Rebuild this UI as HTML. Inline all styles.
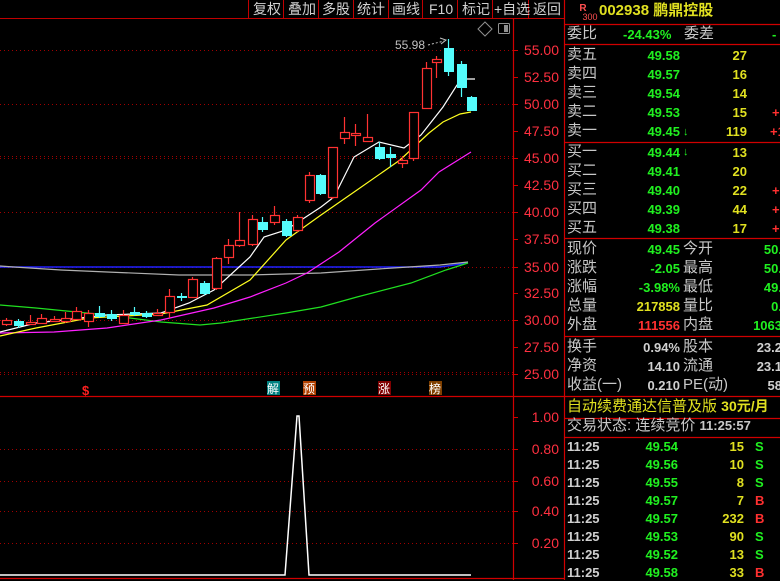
<!DOCTYPE html>
<html><head><meta charset="utf-8"><style>
*{margin:0;padding:0;box-sizing:border-box}
body{width:780px;height:580px;background:#000;overflow:hidden;position:relative;font-family:"Liberation Sans","Noto Sans CJK SC",sans-serif}
.t{position:absolute;white-space:nowrap;font-size:14px;line-height:16px}
.n{font-weight:bold;font-size:13px}
.l{color:#c8c8c8}.g{color:#20f020}.y{color:#e0e020}.r{color:#ff3030}.w{color:#d0d0d0}
.rt{text-align:right}
</style></head><body>
<svg width="780" height="580" style="position:absolute;left:0;top:0">
<!-- top bar -->
<g stroke="#c00000" stroke-width="1">
<line x1="0" y1="18.5" x2="564" y2="18.5"/>
<line x1="248.5" y1="0" x2="248.5" y2="18"/><line x1="283.5" y1="0" x2="283.5" y2="18"/><line x1="318.5" y1="0" x2="318.5" y2="18"/><line x1="353.5" y1="0" x2="353.5" y2="18"/><line x1="388.5" y1="0" x2="388.5" y2="18"/><line x1="422.5" y1="0" x2="422.5" y2="18"/><line x1="457.5" y1="0" x2="457.5" y2="18"/><line x1="492.5" y1="0" x2="492.5" y2="18"/><line x1="528.5" y1="0" x2="528.5" y2="18"/>
</g>
<g stroke="#d00000" stroke-width="1.2">
<line x1="513.5" y1="18" x2="513.5" y2="580"/>
<line x1="564.5" y1="0" x2="564.5" y2="580"/>
<line x1="0" y1="396.5" x2="564" y2="396.5"/>
<line x1="0" y1="578.5" x2="564" y2="578.5"/>
<line x1="565" y1="24.5" x2="780" y2="24.5"/>
<line x1="565" y1="44.5" x2="780" y2="44.5"/>
<line x1="565" y1="142.5" x2="780" y2="142.5"/>
<line x1="565" y1="238.5" x2="780" y2="238.5"/>
<line x1="565" y1="336.5" x2="780" y2="336.5"/>
<line x1="565" y1="396.5" x2="780" y2="396.5"/>
<line x1="565" y1="418.5" x2="780" y2="418.5"/>
<line x1="565" y1="437.5" x2="780" y2="437.5"/>
</g>
<!-- grid -->
<g stroke="#a00000" stroke-width="1" stroke-dasharray="1,3">
<line x1="0" y1="50.5" x2="513" y2="50.5"/><line x1="0" y1="104.5" x2="513" y2="104.5"/>
<line x1="0" y1="156.5" x2="513" y2="156.5"/><line x1="0" y1="158.5" x2="513" y2="158.5"/>
<line x1="0" y1="212.5" x2="513" y2="212.5"/><line x1="0" y1="267.5" x2="513" y2="267.5"/>
<line x1="0" y1="320.5" x2="513" y2="320.5"/><line x1="0" y1="372.5" x2="513" y2="372.5"/><line x1="0" y1="374.5" x2="513" y2="374.5"/>
<line x1="0" y1="449.5" x2="513" y2="449.5"/><line x1="0" y1="481.5" x2="513" y2="481.5"/><line x1="0" y1="511.5" x2="513" y2="511.5"/><line x1="0" y1="543.5" x2="513" y2="543.5"/>
</g>
<g stroke="#d00000"><line x1="513" y1="50.5" x2="518" y2="50.5"/><line x1="513" y1="77.5" x2="518" y2="77.5"/><line x1="513" y1="104.5" x2="518" y2="104.5"/><line x1="513" y1="131.5" x2="518" y2="131.5"/><line x1="513" y1="158.5" x2="518" y2="158.5"/><line x1="513" y1="185.5" x2="518" y2="185.5"/><line x1="513" y1="212.5" x2="518" y2="212.5"/><line x1="513" y1="239.5" x2="518" y2="239.5"/><line x1="513" y1="267.5" x2="518" y2="267.5"/><line x1="513" y1="293.5" x2="518" y2="293.5"/><line x1="513" y1="320.5" x2="518" y2="320.5"/><line x1="513" y1="347.5" x2="518" y2="347.5"/><line x1="513" y1="374.5" x2="518" y2="374.5"/>
<line x1="513" y1="417.5" x2="518" y2="417.5"/><line x1="513" y1="449.5" x2="518" y2="449.5"/><line x1="513" y1="481.5" x2="518" y2="481.5"/><line x1="513" y1="511.5" x2="518" y2="511.5"/><line x1="513" y1="543.5" x2="518" y2="543.5"/></g>
<g fill="#ff3040" font-family="Liberation Sans" font-size="14" text-anchor="end">
<text x="559" y="55">55.00</text><text x="559" y="82">52.50</text><text x="559" y="109">50.00</text><text x="559" y="136">47.50</text><text x="559" y="163">45.00</text><text x="559" y="190">42.50</text><text x="559" y="217">40.00</text><text x="559" y="244">37.50</text><text x="559" y="272">35.00</text><text x="559" y="298">32.50</text><text x="559" y="325">30.00</text><text x="559" y="352">27.50</text><text x="559" y="379">25.00</text>
<text x="559" y="422">1.00</text><text x="559" y="454">0.80</text><text x="559" y="486">0.60</text><text x="559" y="516">0.40</text><text x="559" y="548">0.20</text>
</g>
<!-- icons -->
<path d="M485 22 L492 29 L485 36 L478 29 Z" fill="none" stroke="#909090"/>
<rect x="498.5" y="23.5" width="11" height="10" rx="1" fill="none" stroke="#909090"/><rect x="504" y="25" width="4" height="7" fill="#909090"/>
<!-- MA lines -->
<polyline fill="none" stroke="#2020ff" stroke-width="1.5" points="0,267 440,267 468,263"/>
<polyline fill="none" stroke="#b0b0b0" stroke-width="1.2" points="0,266 14,267 61,270 107,272 179,275 250,275 321,273 393,268 440,265 468,262"/>
<polyline fill="none" stroke="#20e020" stroke-width="1.2" points="0,305 36,308 107,315 161,322 200,325 221,323 286,313 321,307 357,297 411,283 446,270 468,263"/>
<polyline fill="none" stroke="#ff20ff" stroke-width="1.2" points="0,333 54,332 107,328 161,320 214,308 250,297 286,283 307,273 339,252 375,223 421,190 439,172 471,152"/>
<polyline fill="none" stroke="#ffff20" stroke-width="1.2" points="0,336 36,328 89,318 161,314 207,305 250,280 286,240 321,215 357,190 400,160 429,133 443,122 460,114 471,112"/>
<polyline fill="none" stroke="#ffffff" stroke-width="1.2" points="0,332 36,323 107,315 161,313 189,303 214,290 250,257 264,237 286,230 321,207 334,197 354,157 379,142 404,148 421,135 443,107 457,85 465,79 475,79"/>
<!-- candles -->
<g id="c" stroke-width="1.2"></g>
<!-- high label -->
<text x="395" y="49" fill="#c0c0c0" font-size="12" font-family="Liberation Sans">55.98</text>
<path d="M428 45 L444 41" stroke="#c0c0c0" stroke-dasharray="2,2"/><path d="M440 38 L446 40 L441 44" stroke="#c0c0c0" fill="none"/>
<!-- marks -->
<text x="82" y="395" fill="#ff2020" font-size="13" font-weight="bold" font-family="Liberation Sans">$</text>
<rect x="267" y="381" width="13" height="14" fill="#008080"/><text x="267" y="393" fill="#fff" font-size="12" font-family="Noto Sans CJK SC">解</text>
<rect x="303" y="381" width="13" height="14" fill="#b04000"/><text x="303" y="393" fill="#fff" font-size="12" font-family="Noto Sans CJK SC">预</text>
<rect x="378" y="381" width="13" height="14" fill="#800000"/><text x="378" y="393" fill="#fff" font-size="12" font-family="Noto Sans CJK SC">涨</text>
<rect x="429" y="381" width="13" height="14" fill="#804000"/><text x="429" y="393" fill="#fff" font-size="12" font-family="Noto Sans CJK SC">榜</text>
<!-- volume spike -->
<polyline fill="none" stroke="#fff" stroke-width="1.5" points="0,575 285,575 297,416 299,416 309,575 471,575"/>
<!-- R300 badge -->
<text x="583" y="11" fill="#ff5050" font-size="10" font-family="Liberation Sans" text-anchor="middle" font-weight="bold">R</text>
<text x="590" y="20" fill="#ff5050" font-size="9" font-family="Liberation Sans" text-anchor="middle">300</text>
</svg>
<div class="t w" style="left:253px;top:1px">复权</div><div class="t w" style="left:288px;top:1px">叠加</div><div class="t w" style="left:322px;top:1px">多股</div><div class="t w" style="left:357px;top:1px">统计</div><div class="t w" style="left:392px;top:1px">画线</div><div class="t w" style="left:429px;top:1px">F10</div><div class="t w" style="left:462px;top:1px">标记</div><div class="t w" style="left:494px;top:1px">+自选</div><div class="t w" style="left:533px;top:1px">返回</div>
<div class="t y" style="left:599px;top:3px;font-weight:bold;font-size:15px">002938 鹏鼎控股</div>
<div class="t l" style="left:567px;top:26px;font-size:15px">委比</div><div class="t g n" style="left:623px;top:27px">-24.43%</div><div class="t l" style="left:684px;top:26px;font-size:15px">委差</div><div class="t g n" style="left:772px;top:27px">-</div>
<div id="rp"></div>
<script>
var c=[[6,320,324,'r',318,326],[18,321,325,'c',319,328],[30,322,324,'r',315,325],[41,318,323,'r',314,324],[54,319,321,'r',316,322],[65,318,321,'r',312,323],[76,311,319,'r',307,320],[88,313,321,'r',310,327],[99,313,316,'c',306,318],[111,314,318,'c',310,321],[123,315,323,'r',310,324],[134,312,314,'c',307,316],[146,313,316,'c',311,318],[157,313,315,'r',309,316],[169,296,312,'r',289,318],[181,296,297,'c',293,301],[192,279,297,'r',277,298],[204,283,293,'c',281,295],[216,258,288,'r',257,290],[228,245,257,'r',239,264],[239,240,245,'r',212,247],[252,219,244,'r',215,246],[262,222,229,'c',217,232],[274,215,222,'r',206,225],[286,221,235,'c',219,237],[297,217,230,'r',215,232],[309,175,200,'r',172,203],[320,175,193,'c',174,195],[332,147,197,'r',147,199],[344,132,138,'r',117,144],[355,133,135,'r',124,146],[367,137,141,'r',114,142],[379,147,158,'c',142,160],[390,154,157,'c',147,167],[402,160,163,'r',156,168],[413,112,158,'r',112,161],[426,68,108,'r',62,108],[436,59,62,'r',56,78],[448,48,71,'c',39,76],[461,64,87,'c',61,97],[471,97,110,'c',96,111]];
var s='';c.forEach(function(k){var col=k[3]=='r'?'#ff3232':'#54fcfc';var x=k[0];s+='<line x1="'+(x+.5)+'" y1="'+k[4]+'" x2="'+(x+.5)+'" y2="'+k[5]+'" stroke="'+col+'"/>';var h=Math.max(1,k[2]-k[1]);if(k[3]=='r')s+='<rect x="'+(x-4+.5)+'" y="'+(k[1]+.5)+'" width="9" height="'+h+'" fill="#000" stroke="'+col+'"/>';else s+='<rect x="'+(x-4)+'" y="'+k[1]+'" width="10" height="'+(h+1)+'" fill="'+col+'"/>';});
document.getElementById('c').innerHTML=s;
var h='';function row(y,a,b,bc,cc,d,dc,e,ec,ex){h+='<div class="t l" style="left:567px;top:'+y+'px;font-size:15px">'+a+'</div><div class="t n rt '+bc+'" style="left:600px;width:80px;top:'+(y+1)+'px">'+b+'</div>';if(cc)h+=cc;if(d)h+='<div class="t n rt '+dc+'" style="left:690px;width:57px;top:'+(y+1)+'px">'+d+'</div>';if(e)h+='<div class="t '+(ex||'n rt ')+ec+'" style="left:'+(ex?'683px':'750px')+';'+(ex?'':'width:30px;')+'top:'+(y+(ex?0:1))+'px;'+(ex?'font-size:15px':'')+'">'+e+'</div>';}
var ar='<div class="t g" style="left:684px;top:Ypx;font-size:11px">&#129131;</div>';
var S=[['卖五','49.58','27',''],['卖四','49.57','16',''],['卖三','49.54','14',''],['卖二','49.53','15','+'],['卖一','49.45','119','+1']];
S.forEach(function(r,i){var y=47+i*19;h+='<div class="t l" style="left:567px;top:'+y+'px;font-size:15px">'+r[0]+'</div><div class="t n g rt" style="left:600px;width:80px;top:'+(y+1)+'px">'+r[1]+'</div><div class="t n y rt" style="left:690px;width:57px;top:'+(y+1)+'px">'+r[2]+'</div><div class="t n r" style="left:'+(r[3].length>1?770:772)+'px;top:'+(y+1)+'px">'+r[3]+'</div>';});
var B=[['买一','49.44','13',''],['买二','49.41','20',''],['买三','49.40','22','+'],['买四','49.39','44','+'],['买五','49.38','17','+']];
B.forEach(function(r,i){var y=144+i*19;h+='<div class="t l" style="left:567px;top:'+y+'px;font-size:15px">'+r[0]+'</div><div class="t n g rt" style="left:600px;width:80px;top:'+(y+1)+'px">'+r[1]+'</div><div class="t n y rt" style="left:690px;width:57px;top:'+(y+1)+'px">'+r[2]+'</div><div class="t n r" style="left:772px;top:'+(y+1)+'px">'+r[3]+'</div>';});
h+='<div class="t g" style="left:683px;top:124px;font-size:11px">&#8595;</div><div class="t g" style="left:683px;top:144px;font-size:11px">&#8595;</div>';
var Q=[['现价','49.45','g','今开','50.','g'],['涨跌','-2.05','g','最高','50.','g'],['涨幅','-3.98%','g','最低','49.','g'],['总量','217858','y','量比','0.','g'],['外盘','111556','r','内盘','1063','g'],['换手','0.94%','w','股本','23.2','w'],['净资','14.10','w','流通','23.1','w'],['收益(一)','0.210','w','PE(动)','58','w']];
Q.forEach(function(r,i){var y=i<5?241+i*19:339+(i-5)*19;h+='<div class="t l" style="left:567px;top:'+y+'px;font-size:15px">'+r[0]+'</div><div class="t n rt '+r[2]+'" style="left:600px;width:80px;top:'+(y+1)+'px">'+r[1]+'</div><div class="t l" style="left:683px;top:'+y+'px;font-size:15px">'+r[3]+'</div><div class="t n rt '+r[5]+'" style="left:700px;width:82px;top:'+(y+1)+'px">'+r[4]+'</div>';});
h+='<div class="t y" style="left:567px;top:398px;font-size:15px">自动续费通达信普及版 <b style="font-size:14px">30元/月</b></div>';
h+='<div class="t l" style="left:567px;top:418px;font-size:15px">交易状态: 连续竞价 <b style="font-size:13px">11:25:57</b></div>';
var T=[['49.54','15','S'],['49.56','10','S'],['49.55','8','S'],['49.57','7','B'],['49.57','232','B'],['49.53','90','S'],['49.52','13','S'],['49.58','33','B']];
T.forEach(function(r,i){var y=438+i*18;h+='<div class="t n w" style="left:567px;top:'+(y+1)+'px">11:25</div><div class="t n g rt" style="left:600px;width:78px;top:'+(y+1)+'px">'+r[0]+'</div><div class="t n y rt" style="left:700px;width:44px;top:'+(y+1)+'px">'+r[1]+'</div><div class="t n '+(r[2]=='S'?'g':'r')+'" style="left:755px;top:'+(y+1)+'px">'+r[2]+'</div>';});
document.getElementById('rp').innerHTML=h;
</script>
</body></html>
